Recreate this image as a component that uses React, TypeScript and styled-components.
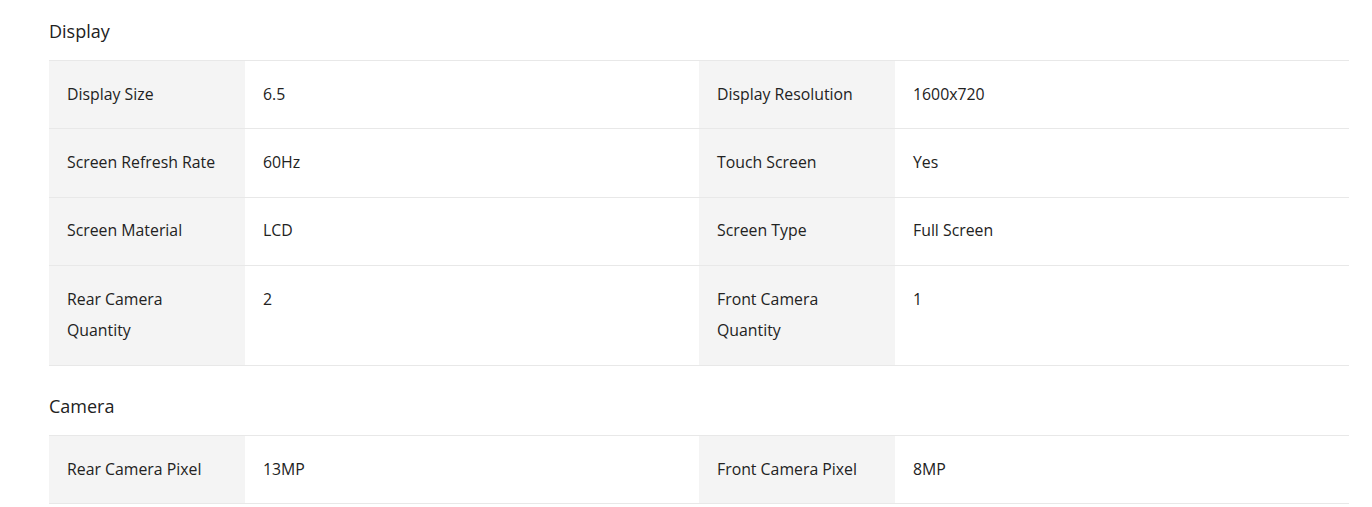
import React from "react";
import styled, { createGlobalStyle } from "styled-components";

const Global = createGlobalStyle`
  html, body { margin: 0; padding: 0; background: #fff; }
  body { font-family: "Open Sans", "Noto Sans", sans-serif; color: #222; }
`;

const Page = styled.div`
  padding: 0 23px 0 49px;
`;

const Section = styled.section`
  & + & { margin-top: 9px; }
`;

const Heading = styled.h2`
  margin: 0;
  height: 60px;
  display: flex;
  align-items: center;
  padding-top: 2px;
  box-sizing: border-box;
  font-size: 18px;
  font-weight: 400;
  color: #222;
`;

const Table = styled.div`
  width: 1300px;
  display: grid;
  grid-template-columns: 196px 454px 196px 454px;
  border-top: 1px solid #e8e8e8;
`;

const Cell = styled.div<{ $label?: boolean }>`
  background: ${(p) => (p.$label ? "#f4f4f4" : "#fff")};
  padding: 17.83px 18px;
  font-size: 15.83px;
  line-height: 2;
  color: #222;
  border-bottom: 1px solid #e8e8e8;
`;

type Row = [string, string, string, string];

const sections: { title: string; rows: Row[] }[] = [
  {
    title: "Display",
    rows: [
      ["Display Size", "6.5", "Display Resolution", "1600x720"],
      ["Screen Refresh Rate", "60Hz", "Touch Screen", "Yes"],
      ["Screen Material", "LCD", "Screen Type", "Full Screen"],
      ["Rear Camera Quantity", "2", "Front Camera Quantity", "1"],
    ],
  },
  {
    title: "Camera",
    rows: [["Rear Camera Pixel", "13MP", "Front Camera Pixel", "8MP"]],
  },
];

export default function App() {
  return (
    <>
      <Global />
      <Page>
        {sections.map((s) => (
          <Section key={s.title}>
            <Heading>{s.title}</Heading>
            <Table>
              {s.rows.map((r, i) => (
                <React.Fragment key={i}>
                  <Cell $label>{r[0]}</Cell>
                  <Cell>{r[1]}</Cell>
                  <Cell $label>{r[2]}</Cell>
                  <Cell>{r[3]}</Cell>
                </React.Fragment>
              ))}
            </Table>
          </Section>
        ))}
      </Page>
    </>
  );
}
